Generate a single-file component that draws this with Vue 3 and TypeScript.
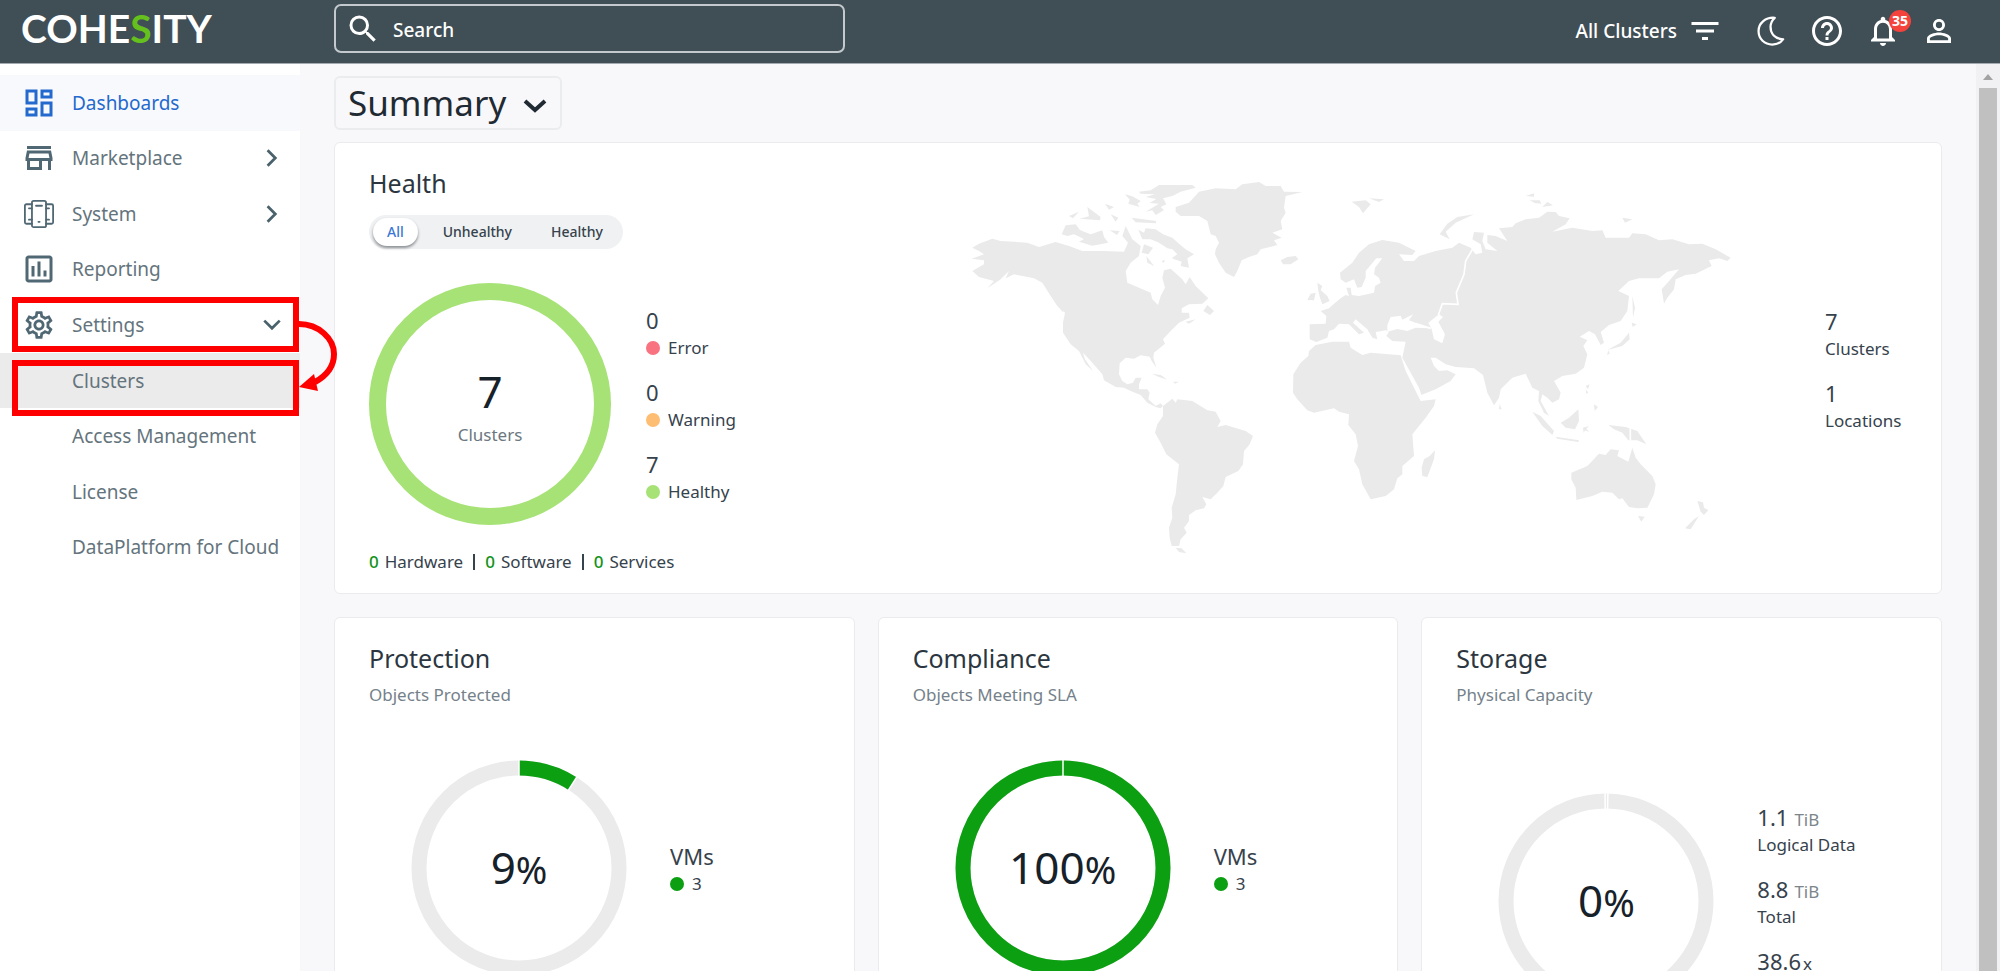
<script setup lang="ts">
import { ref } from 'vue'

interface NavItem {
  label: string
  icon?: 'dashboards' | 'marketplace' | 'system' | 'reporting' | 'settings'
  arrow?: 'right' | 'down'
  state?: 'active' | 'hover'
}

interface Stat {
  value: string
  label?: string
  unit?: string
  dot?: string
}

const navItems: NavItem[] = [
  { label: 'Dashboards', icon: 'dashboards', state: 'active' },
  { label: 'Marketplace', icon: 'marketplace', arrow: 'right' },
  { label: 'System', icon: 'system', arrow: 'right' },
  { label: 'Reporting', icon: 'reporting' },
  { label: 'Settings', icon: 'settings', arrow: 'down' },
  { label: 'Clusters', state: 'hover' },
  { label: 'Access Management' },
  { label: 'License' },
  { label: 'DataPlatform for Cloud' },
]

const filters = ['All', 'Unhealthy', 'Healthy']
const activeFilter = ref('All')
const dashboard = ref('Summary')
const query = ref('')

const healthStats: Stat[] = [
  { value: '0', label: 'Error', dot: 'error' },
  { value: '0', label: 'Warning', dot: 'warning' },
  { value: '7', label: 'Healthy', dot: 'healthy' },
]

const placeStats: Stat[] = [
  { value: '7', label: 'Clusters' },
  { value: '1', label: 'Locations' },
]

const issues = [
  { count: 0, label: 'Hardware' },
  { count: 0, label: 'Software' },
  { count: 0, label: 'Services' },
]

const tiles: { title: string; subtitle: string; percent: number; low?: boolean; stats: Stat[] }[] = [
  {
    title: 'Protection',
    subtitle: 'Objects Protected',
    percent: 9,
    stats: [{ value: 'VMs', label: '3', dot: 'ok' }],
  },
  {
    title: 'Compliance',
    subtitle: 'Objects Meeting SLA',
    percent: 100,
    stats: [{ value: 'VMs', label: '3', dot: 'ok' }],
  },
  {
    title: 'Storage',
    subtitle: 'Physical Capacity',
    percent: 0,
    low: true,
    stats: [
      { value: '1.1', unit: 'TiB', label: 'Logical Data' },
      { value: '8.8', unit: 'TiB', label: 'Total' },
      { value: '38.6', unit: 'x' },
    ],
  },
]

const tickAngles = (percent: number): number[] => {
  if (percent === 0) return [-0.5, 1]
  return percent === 100 ? [0] : [0, percent * 3.6]
}
</script>

<template>
  <div class="shell">
    <header class="topbar">
      <a class="logo" href="#" aria-label="Cohesity home">COHE<span>S</span>ITY</a>
      <label class="search">
        <svg class="icon" viewBox="0 0 24 24" aria-hidden="true">
          <path d="M15.5 14h-.79l-.28-.27A6.47 6.47 0 0 0 16 9.500 6.500 6.500 0 1 0 9.500 16c1.610 0 3.090-.59 4.230-1.570l.27.28v.79l5 4.990L20.490 19l-4.990-5zm-6 0C7.010 14 5 11.990 5 9.500S7.010 5 9.500 5 14 7.010 14 9.500 11.990 14 9.500 14z" />
        </svg>
        <input v-model="query" type="search" placeholder="Search" aria-label="Search" />
      </label>
      <div class="tools">
        <button class="scope" type="button">
          All Clusters
          <svg class="icon" viewBox="0 0 24 24" aria-hidden="true">
            <path d="M10 18h4v-2h-4v2zM3 6v2h18V6H3zm3 7h12v-2H6v2z" />
          </svg>
        </button>
        <button class="tool" type="button" aria-label="Dark mode">
          <svg class="icon line" viewBox="0 0 24 24" aria-hidden="true">
            <path d="M14.500 3.200C8.500 2.700 3.700 6.700 3.700 12s4 9 9.200 9c3.200 0 5.700-1.200 7.200-3.500-5.600-.4-8.400-3.700-8.400-8.300 0-2.400 1-4.400 2.800-6z" />
          </svg>
        </button>
        <button class="tool" type="button" aria-label="Help">
          <svg class="icon" viewBox="0 0 24 24" aria-hidden="true">
            <path d="M11 18h2v-2h-2v2zm1-16C6.480 2 2 6.480 2 12s4.480 10 10 10 10-4.480 10-10S17.520 2 12 2zm0 18c-4.410 0-8-3.590-8-8s3.590-8 8-8 8 3.590 8 8-3.590 8-8 8zm0-14c-2.210 0-4 1.790-4 4h2c0-1.100.9-2 2-2s2 .9 2 2c0 2-3 1.750-3 5h2c0-2.250 3-2.500 3-5 0-2.210-1.790-4-4-4z" />
          </svg>
        </button>
        <button class="tool" type="button" aria-label="Notifications">
          <svg class="icon" viewBox="0 0 24 24" aria-hidden="true">
            <path d="M12 22c1.100 0 2-.9 2-2h-4c0 1.100.9 2 2 2zm6-6v-5c0-3.070-1.630-5.640-4.500-6.320V4c0-.83-.67-1.500-1.500-1.500s-1.500.67-1.500 1.500v.68C7.640 5.360 6 7.920 6 11v5l-2 2v1h16v-1l-2-2zm-2 1H8v-6c0-2.480 1.510-4.500 4-4.500s4 2.020 4 4.500v6z" />
          </svg>
          <span class="badge">35</span>
        </button>
        <button class="tool" type="button" aria-label="Account">
          <svg class="icon" viewBox="0 0 24 24" aria-hidden="true">
            <path d="M12 5.900a2.100 2.100 0 1 1 0 4.200 2.100 2.100 0 0 1 0-4.200m0 9c2.970 0 6.100 1.460 6.100 2.100v1.100H5.900V17c0-.64 3.130-2.100 6.100-2.100M12 4C9.790 4 8 5.790 8 8s1.790 4 4 4 4-1.790 4-4-1.790-4-4-4zm0 9c-2.670 0-8 1.340-8 4v3h16v-3c0-2.660-5.330-4-8-4z" />
          </svg>
        </button>
      </div>
    </header>

    <div class="body">
      <nav class="sidebar" aria-label="Main">
        <ul>
          <li v-for="item in navItems" :key="item.label">
            <component
              :is="item.arrow ? 'button' : 'a'"
              class="nav-item"
              :class="item.state"
              :href="item.arrow ? undefined : '#'"
              :type="item.arrow ? 'button' : undefined"
            >
              <span class="nav-icon">
                <svg v-if="item.icon === 'dashboards'" class="icon" viewBox="0 0 24 24" aria-hidden="true">
                  <path d="M19 5v2h-4V5h4M9 5v6H5V5h4m10 8v6h-4v-6h4M9 17v2H5v-2h4M21 3h-8v6h8V3zM11 3H3v10h8V3zm10 8h-8v10h8V11zm-10 4H3v6h8v-6z" />
                </svg>
                <svg v-else-if="item.icon === 'marketplace'" class="icon" viewBox="0 0 24 24" aria-hidden="true">
                  <path d="M18.360 9l.6 3H5.040l.6-3h12.720M20 4H4v2h16V4zm0 3H4l-1 5v2h1v6h10v-6h4v6h2v-6h1v-2l-1-5zM6 18v-4h6v4H6z" />
                </svg>
                <svg v-else-if="item.icon === 'system'" class="icon line thin" viewBox="0 0 24 24" aria-hidden="true">
                  <rect x="7.300" y="3.200" width="9.400" height="17.600" rx="1.200" />
                  <path d="M7.300 5.500H3.600a1 1 0 0 0-1 1v11a1 1 0 0 0 1 1h3.700M16.700 5.500h3.700a1 1 0 0 1 1 1v11a1 1 0 0 1-1 1h-3.700M10 6.500h4M11.600 17.200h.8M5.300 8.200h2M5.300 15.800h2M16.700 8.200h2M16.700 15.800h2" />
                </svg>
                <svg v-else-if="item.icon === 'reporting'" class="icon" viewBox="0 0 24 24" aria-hidden="true">
                  <path d="M9 17H7v-7h2v7zm4 0h-2V7h2v10zm4 0h-2v-4h2v4zm2 2H5V5h14v14zm0-16H5c-1.100 0-2 .9-2 2v14c0 1.100.9 2 2 2h14c1.100 0 2-.9 2-2V5c0-1.100-.9-2-2-2z" />
                </svg>
                <svg v-else-if="item.icon === 'settings'" class="icon" viewBox="-1 -1 26 26" aria-hidden="true">
                  <path d="M19.430 12.980c.04-.32.07-.64.07-.98 0-.34-.03-.66-.07-.98l2.110-1.650c.19-.15.24-.42.12-.64l-2-3.460c-.09-.16-.26-.25-.44-.25-.06 0-.12.010-.17.030l-2.490 1c-.52-.4-1.080-.73-1.690-.98l-.38-2.650C14.460 2.180 14.250 2 14 2h-4c-.25 0-.46.18-.49.42l-.38 2.650c-.61.25-1.170.59-1.690.98l-2.490-1c-.06-.02-.12-.03-.18-.03-.17 0-.34.09-.43.25l-2 3.460c-.13.22-.07.49.12.64l2.110 1.650c-.04.32-.07.65-.07.98 0 .33.03.66.07.98l-2.110 1.650c-.19.15-.24.42-.12.64l2 3.460c.09.16.26.25.44.25.06 0 .12-.01.17-.03l2.490-1c.52.4 1.080.73 1.690.98l.38 2.650c.03.24.24.42.49.42h4c.25 0 .46-.18.49-.42l.38-2.650c.61-.25 1.170-.59 1.690-.98l2.490 1c.06.02.12.03.18.03.17 0 .34-.09.43-.25l2-3.460c.12-.22.07-.49-.12-.64l-2.110-1.650zm-1.980-1.710c.04.31.05.52.05.73 0 .21-.02.43-.05.73l-.14 1.130.89.7 1.080.84-.7 1.210-1.270-.51-1.040-.42-.9.68c-.43.32-.84.56-1.250.73l-1.060.43-.16 1.130-.2 1.350h-1.400l-.19-1.350-.16-1.130-1.060-.43c-.43-.18-.83-.41-1.230-.71l-.91-.7-1.060.43-1.270.51-.7-1.210 1.080-.84.89-.7-.14-1.130c-.03-.31-.05-.54-.05-.74s.02-.43.05-.73l.14-1.130-.89-.7-1.080-.84.7-1.210 1.270.51 1.040.42.9-.68c.43-.32.84-.56 1.250-.73l1.060-.43.16-1.130.2-1.350h1.390l.19 1.350.16 1.130 1.060.43c.43.18.83.41 1.230.71l.91.7 1.060-.43 1.270-.51.7 1.210-1.070.85-.89.7.14 1.130zM12 8c-2.210 0-4 1.790-4 4s1.790 4 4 4 4-1.790 4-4-1.790-4-4-4zm0 6c-1.100 0-2-.9-2-2s.9-2 2-2 2 .9 2 2-.9 2-2 2z" />
                </svg>
              </span>
              <span class="nav-label">{{ item.label }}</span>
              <svg v-if="item.arrow" class="chevron" :class="item.arrow" viewBox="0 0 20 20" aria-hidden="true">
                <path d="M6 3l7 7-7 7" />
              </svg>
            </component>
          </li>
        </ul>
        <svg class="callout" viewBox="0 0 328 120" aria-hidden="true">
          <rect x="3" y="3" width="281" height="49" />
          <rect x="3" y="66" width="281" height="50" />
          <path class="curve" d="M287 27C307 27 322 42 322 57C322 70 314 79 303 85" />
          <path class="head" d="M287 90L302 77L306 94Z" />
        </svg>
      </nav>

      <main class="content">
        <div class="picker">
          <select v-model="dashboard" aria-label="Dashboard">
            <option>Summary</option>
          </select>
          <svg viewBox="0 0 24 14" aria-hidden="true"><path d="M2 2l10 9L22 2" /></svg>
        </div>

        <div class="cards">
          <section class="card health">
            <div class="health-main">
              <h2>Health</h2>
              <div class="segments" role="group" aria-label="Cluster filter">
                <button
                  v-for="name in filters"
                  :key="name"
                  type="button"
                  :class="{ on: activeFilter === name }"
                  @click="activeFilter = name"
                >
                  {{ name }}
                </button>
              </div>
              <div class="health-row">
                <div class="ring big">
                  <svg viewBox="0 0 242 242" aria-hidden="true">
                    <circle class="healthy-ring" cx="121" cy="121" r="112.500" />
                  </svg>
                  <div class="ring-text">
                    <span class="figure">7</span>
                    <span class="caption">Clusters</span>
                  </div>
                </div>
                <dl class="stats">
                  <div v-for="s in healthStats" :key="s.label" class="stat">
                    <dt><i class="dot" :class="s.dot"></i>{{ s.label }}</dt>
                    <dd>{{ s.value }}</dd>
                  </div>
                </dl>
              </div>
              <ul class="issues">
                <li v-for="i in issues" :key="i.label"><b>{{ i.count }}</b>{{ i.label }}</li>
              </ul>
            </div>

            <svg class="map" viewBox="0 0 2340 1200" role="img" aria-label="World map">
              <g class="land">
                <path d="M40 230L60 218L100 203L125 210L205 215L240 228L290 213L330 225L370 240L430 240L495 242L507 215L490 195L500 165L520 205L545 225L540 255L515 275L500 300L505 335L540 350L575 365L580 385L597 402L605 375L618 350L610 320L615 298L635 293L670 325L680 340L692 318L710 345L748 382L730 398L690 400L668 412L668 425L690 425L692 440L660 455L635 480L612 505L618 518L585 545L583 560L592 590L578 570L572 557L545 553L525 563L500 560L482 577L480 610L490 630L505 640L522 635L530 620L548 620L540 640L540 655L565 655L572 665L568 685L590 705L605 697L612 705L605 712L590 708L565 695L545 672L515 660L495 650L470 648L435 628L430 610L400 575L372 545L378 565L402 600L380 580L360 540L335 520L312 485L312 455L318 425L295 405L275 375L250 335L225 322L165 310L140 322L150 300L125 325L85 352L105 330L60 318L40 300L75 280L75 268L38 263L75 250L60 240Z" />
                <path d="M612 705L640 683L650 695L655 685L700 690L745 718L770 722L785 750L775 768L800 762L860 780L882 795L872 820L855 840L852 880L838 900L800 918L793 945L775 965L755 985L730 978L742 1000L735 1012L710 1018L690 1032L690 1050L675 1070L683 1085L665 1105L660 1125L638 1125L632 1100L630 1070L640 1040L638 1010L650 970L655 920L660 880L622 850L605 815L588 785L595 760L612 735ZM650 1130L668 1132L682 1147L660 1143Z" />
                <path d="M650 108L690 95L720 62L770 52L830 55L850 40L900 33L920 45L965 45L975 62L1030 63L980 75L975 110L980 125L965 150L970 175L940 185L968 200L945 208L955 222L905 235L895 250L870 258L848 268L835 300L825 318L800 305L780 275L768 250L770 235L780 215L770 195L755 190L745 150L720 135L665 135L650 122Z" />
                <path d="M965 268L985 258L1010 255L1018 265L995 280L972 280Z" />
                <path d="M1075 335L1090 345L1085 358L1105 375L1112 390L1090 400L1083 380L1078 360ZM1045 387L1055 368L1070 365L1065 388Z" />
                <path d="M540 62L575 58L600 42L700 42L710 50L665 62L640 75L612 82L622 100L605 108L615 118L590 132L580 118L560 122L600 98L572 96L592 84L560 78L588 70L545 68ZM498 70L520 76L545 90L535 98L542 108L508 98L512 86ZM308 190L320 163L350 160L362 176L375 182L395 190L430 178L435 198L448 215L400 224L360 212L375 204L345 190L325 195ZM538 176L555 185L560 172L590 175L612 190L640 200L660 218L680 235L705 250L685 262L690 290L665 285L668 272L638 262L655 250L640 235L625 232L600 215L575 205L550 205ZM555 220L582 230L568 250L548 245ZM330 135L360 122L342 142ZM385 108L425 138L423 148L362 143L390 136ZM438 98L465 108L450 116ZM455 130L478 140L470 152ZM518 140L592 150L590 157L530 154ZM452 178L482 180L474 192ZM562 255L585 285L565 275ZM608 270L618 266L614 276Z" />
                <path d="M733 420L745 402L765 420L753 432ZM680 452L710 445L690 458ZM578 608L605 612L625 626L600 618ZM642 632L660 632L648 638ZM295 403L322 418L310 422Z" />
              </g>
              <g class="land" transform="translate(1140 0)">
                <path d="M-88 460L-40 458L-38 435L-55 420L-30 412L-15 398L5 382L20 372L30 375L22 350L35 350L38 372L60 375L105 365L108 345L125 335L120 320L105 310L108 290L130 262L112 262L80 300L80 320L68 348L55 350L45 325L20 335L5 325L3 305L40 275L60 245L90 220L130 207L180 215L230 240L220 252L180 250L195 270L225 270L240 255L290 240L340 230L360 215L395 230L410 250L430 245L425 220L400 205L405 183L435 185L430 210L440 235L475 240L445 215L445 192L470 195L505 210L480 172L520 168L530 157L560 145L600 140L625 122L650 123L660 135L692 142L680 160L640 182L700 170L760 180L790 178L800 200L870 200L880 187L920 190L960 208L1000 205L1050 220L1090 218L1130 235L1175 260L1165 270L1140 262L1110 268L1118 285L1070 308L1040 312L1010 325L1005 355L985 380L975 398L968 355L990 330L1020 295L985 302L960 322L900 322L870 330L838 360L870 375L865 420L845 450L810 462L785 483L795 515L785 522L768 490L750 480L722 497L745 508L733 525L745 550L735 590L710 608L670 615L645 630L665 665L660 685L640 695L625 680L610 670L605 690L630 735L615 725L598 690L600 660L580 650L560 608L520 620L485 655L480 680L465 703L445 665L432 612L405 592L350 588L320 580L290 560L275 560L285 585L300 600L325 598L350 610L335 630L290 655L247 672L240 650L215 605L190 560L200 512L160 510L142 495L150 482L140 478L110 483L115 505L100 500L85 475L50 445L42 455L75 485L60 490L30 460L0 458L-15 475L-30 480L-35 500L-68 513L-88 505Z" />
                <path d="M-70 522L-20 512L30 512L35 530L70 552L95 545L185 553L200 600L225 650L245 690L290 685L285 705L260 740L220 790L225 855L190 885L190 910L175 922L165 955L140 975L95 985L70 940L60 895L45 870L57 825L50 790L28 762L30 730L0 722L-15 712L-75 725L-95 718L-125 685L-138 665L-137 610L-115 575L-92 555L-90 540Z" />
                <path d="M288 838L285 865L265 918L250 915L248 890L255 865L272 855Z" />
                <path d="M697 905L745 885L780 848L800 852L815 835L840 838L835 855L868 872L880 830L890 860L905 880L940 915L950 940L945 970L925 1010L895 1012L870 1008L850 982L840 985L820 965L790 962L760 975L712 987L710 950L697 925ZM897 1035L917 1037L907 1052Z" />
                <path d="M1075 990L1092 994L1095 1010L1108 1018L1095 1032L1085 1022ZM1080 1035L1055 1075L1038 1072L1065 1045Z" />
                <path d="M808 762L860 768L895 780L922 820L895 808L868 808L850 785L825 775ZM665 755L690 740L718 715L720 750L708 775L680 770ZM580 722L605 735L645 780L640 792L610 765ZM650 797L720 808L718 813L655 803ZM732 770L750 765L742 773L750 783L738 778L734 786ZM740 645L752 640L747 655ZM765 700L777 708L767 720ZM740 655L748 665L742 668Z" />
                <path d="M870 485L872 505L850 525L805 537L845 515ZM878 455L893 460L881 468ZM880 375L888 410L882 440ZM482 700L488 715L480 715ZM808 538L812 548L804 552Z" />
                <path d="M38 92L80 88L95 100L72 127L60 108ZM90 82L135 85L120 93ZM302 190L325 158L355 138L405 130L350 155L320 182L332 205ZM560 75L585 67L585 77ZM572 88L602 88L607 98L587 96ZM610 108L625 93L642 103ZM850 140L880 145L858 155Z" />
              </g>
              <g transform="translate(1140 0)">
                <path class="sea" d="M145 482L145 462L155 438L185 434L190 446L222 430L210 448L240 460L275 472L230 470L205 480L175 474ZM268 455L300 430L312 438L298 452L318 490L310 517L285 505L278 475Z" />
                <path class="seam" d="M402 232L380 270L375 310L352 365L357 400L310 398L298 432M230 458L275 472M874 770V812" />
              </g>
            </svg>

            <dl class="stats places">
              <div v-for="s in placeStats" :key="s.label" class="stat">
                <dt>{{ s.label }}</dt>
                <dd>{{ s.value }}</dd>
              </div>
            </dl>
          </section>

          <section v-for="t in tiles" :key="t.title" class="card tile">
            <h2>{{ t.title }}</h2>
            <p class="subtitle">{{ t.subtitle }}</p>
            <div class="tile-row" :class="{ low: t.low }">
              <div class="ring">
                <svg viewBox="0 0 216 216" aria-hidden="true">
                  <circle class="track" cx="108" cy="108" r="100" />
                  <circle
                    v-if="t.percent > 0"
                    class="value"
                    cx="108"
                    cy="108"
                    r="100"
                    pathLength="100"
                    :stroke-dasharray="`${t.percent} 100`"
                    transform="rotate(-90 108 108)"
                  />
                  <path
                    v-for="a in tickAngles(t.percent)"
                    :key="a"
                    class="tick"
                    d="M108 0V17"
                    :transform="`rotate(${a} 108 108)`"
                  />
                </svg>
                <div class="ring-text">
                  <span class="figure">{{ t.percent }}<small>%</small></span>
                </div>
              </div>
              <dl class="stats">
                <div v-for="s in t.stats" :key="s.value" class="stat">
                  <dt><i v-if="s.dot" class="dot" :class="s.dot"></i>{{ s.label }}</dt>
                  <dd>{{ s.value }}<span v-if="s.unit" class="unit" :class="{ times: s.unit === 'x' }">{{ s.unit }}</span></dd>
                </div>
              </dl>
            </div>
          </section>
        </div>
      </main>

      <div class="scrollbar" aria-hidden="true">
        <svg viewBox="0 0 24 24"><path d="M12 10l5 6H7z" /></svg>
        <div class="thumb"></div>
      </div>
    </div>
  </div>
</template>

<style>
body {
  margin: 0;
  overflow: hidden;
}
</style>

<style scoped>
.shell {
  display: flex;
  flex-direction: column;
  height: 100vh;
  overflow: hidden;
  color: #36424c;
  font-family: 'Noto Sans', 'Open Sans', sans-serif;
  font-size: 17px;
  line-height: 24px;
}

.shell *,
.shell *::before {
  box-sizing: border-box;
}

button,
input,
select {
  border: 0;
  padding: 0;
  background: none;
  color: inherit;
  font: inherit;
}

a {
  color: inherit;
  text-decoration: none;
}

ul,
dl,
dd,
h2,
p {
  margin: 0;
  padding: 0;
  list-style: none;
}

.icon {
  display: block;
  width: 36px;
  height: 36px;
  fill: currentColor;
}

.icon.line {
  fill: none;
  stroke: currentColor;
  stroke-width: 1.500;
  stroke-linejoin: round;
  stroke-linecap: round;
}

.icon.thin {
  stroke-width: 1.200;
}

/* Top bar */
.topbar {
  display: flex;
  flex: none;
  align-items: center;
  height: 64px;
  padding: 0 43px 2px 21px;
  border-bottom: 1px solid #a3abb0;
  background: #404e56;
  color: #fff;
  font-size: 19px;
  font-weight: 500;
}

.logo {
  flex: none;
  width: 313px;
  padding-bottom: 6px;
  font-family: Lato, sans-serif;
  font-size: 39px;
  font-weight: 700;
  line-height: 48px;
}

.logo span {
  color: #65c01e;
}

.search {
  display: flex;
  flex: 0 1 511px;
  align-items: center;
  gap: 12px;
  height: 49px;
  margin-bottom: 4px;
  padding-left: 9px;
  border: 2px solid #c3c9cc;
  border-radius: 7px;
}

.search input {
  flex: 1;
  min-width: 0;
  padding-top: 3px;
  outline: 0;
}

.search input::placeholder {
  color: #fff;
  opacity: 1;
}

.tools {
  display: flex;
  gap: 20px;
  margin-left: auto;
}

.scope {
  display: flex;
  align-items: center;
  gap: 10px;
  margin-right: 10px;
}

.tool {
  position: relative;
}

.badge {
  position: absolute;
  top: -3px;
  right: -10px;
  width: 22px;
  height: 22px;
  border-radius: 50%;
  background: #f4433c;
  font-size: 14px;
  font-weight: 700;
  line-height: 22px;
  text-align: center;
}

/* Sidebar */
.body {
  display: flex;
  flex: 1;
  min-height: 0;
  background: #f8f8fb;
}

.sidebar {
  position: relative;
  flex: none;
  width: 300px;
  padding-top: 11px;
  background: #fff;
}

.sidebar ul {
  display: grid;
  grid-template-columns: minmax(0, 1fr);
  grid-auto-rows: 1fr;
  height: 500px;
}

.nav-item {
  display: flex;
  align-items: center;
  width: 100%;
  height: 100%;
  padding: 0 17px 0 21px;
  color: #64747d;
  font-size: 19px;
  text-align: left;
}

.nav-item.active {
  background: #f8f9fc;
  color: #2369ce;
}

.nav-item.hover {
  background: #ebebeb;
}

.nav-icon {
  flex: none;
  width: 51px;
  color: #506874;
}

.active .nav-icon {
  color: inherit;
}

.nav-label {
  flex: 1;
  white-space: nowrap;
}

.chevron {
  width: 22px;
  height: 22px;
  fill: none;
  stroke: #4a626d;
  stroke-width: 2.500;
}

.chevron.down {
  transform: rotate(90deg);
}

.callout {
  position: absolute;
  top: 233px;
  left: 12px;
  z-index: 1;
  width: 328px;
  height: 120px;
  fill: none;
  stroke: #f00;
  stroke-width: 6;
  pointer-events: none;
}

.callout .head {
  fill: #f00;
  stroke: none;
}

/* Content */
.content {
  flex: 1;
  min-width: 0;
  padding: 12px 34px 24px;
}

.picker {
  position: relative;
  width: max-content;
  margin-bottom: 12px;
  color: #1f2a33;
}

.picker select {
  display: block;
  height: 54px;
  padding: 0 53px 0 12px;
  border: 2px solid #ebecee;
  border-radius: 6px;
  appearance: none;
  font-size: 35px;
  line-height: 48px;
}

.picker svg {
  position: absolute;
  top: 23px;
  right: 15px;
  width: 24px;
  height: 14px;
  fill: none;
  stroke: currentColor;
  stroke-width: 4;
  pointer-events: none;
}

.cards {
  display: grid;
  grid-template-columns: repeat(3, minmax(0, 1fr));
  gap: 23px;
}

.card {
  padding: 24px 34px 19px;
  border: 1px solid #ebebed;
  border-radius: 6px;
  background: #fff;
}

h2 {
  color: #2b3640;
  font-size: 25px;
  font-weight: 400;
  line-height: 32px;
}

.health {
  display: grid;
  grid-column: 1 / -1;
  grid-template-columns: 504px minmax(0, 1fr) 82px;
  align-items: center;
}

.segments {
  display: flex;
  gap: 11px;
  width: max-content;
  margin-top: 16px;
  padding: 3px 6px 3px 4px;
  border-radius: 17px;
  background: #eff1f3;
  font-size: 14px;
  font-weight: 500;
}

.segments button {
  height: 28px;
  padding: 0 14px;
  border-radius: 14px;
}

.segments .on {
  background: #fff;
  box-shadow: 0 2px 3px #8b8f92;
  color: #3a77d6;
}

.health-row {
  display: flex;
  align-items: center;
  gap: 35px;
  margin-top: 34px;
}

.ring {
  display: grid;
  flex: none;
  place-items: center;
  width: 216px;
}

.ring.big {
  width: 242px;
}

.ring > * {
  grid-area: 1 / 1;
}

.ring svg {
  display: block;
  width: 100%;
  fill: none;
}

.healthy-ring {
  stroke: #a6e276;
  stroke-width: 17;
}

.track {
  stroke: #ebebeb;
  stroke-width: 15;
}

.value {
  stroke: #0c9f12;
  stroke-width: 15;
}

.tick {
  stroke: #fff;
  stroke-width: 1.500;
}

.ring-text {
  display: flex;
  flex-direction: column;
  align-items: center;
}

.figure {
  color: #17212a;
  font-size: 44px;
  line-height: 60px;
}

.figure small {
  font-size: 38px;
}

.caption {
  margin-top: 2px;
  color: #6c7780;
}

.stats {
  display: grid;
  gap: 17px;
}

.places {
  padding-bottom: 2px;
}

.stat {
  display: flex;
  flex-direction: column-reverse;
}

.stat dt {
  display: flex;
  align-items: center;
  min-height: 24px;
  white-space: nowrap;
}

.stat dd {
  font-size: 22px;
  line-height: 31px;
}

.dot {
  width: 14px;
  height: 14px;
  margin-right: 8px;
  border-radius: 50%;
}

.dot.error {
  background: #f9727f;
}

.dot.warning {
  background: #fdbd72;
}

.dot.healthy {
  background: #a6e276;
}

.dot.ok {
  background: #0c9f12;
}

.unit {
  margin-left: 6px;
  color: #7b868c;
  font-size: 17px;
  line-height: 1;
}

.unit.times {
  margin-left: 2px;
  color: inherit;
}

.issues {
  display: flex;
  margin-top: 25px;
}

.issues li {
  display: flex;
  align-items: center;
}

.issues li + li::before {
  width: 2px;
  height: 16px;
  margin: 0 10px;
  background: #36424c;
  content: '';
}

.issues b {
  margin-right: 6px;
  color: #14931a;
  font-weight: 500;
}

.map {
  display: block;
  justify-self: center;
  width: 100%;
  max-width: 780px;
}

.land {
  fill: #eaeaea;
}

.sea {
  fill: #fff;
}

.seam {
  fill: none;
  stroke: #fff;
  stroke-width: 5;
}

.subtitle {
  margin-top: 9px;
  color: #75818a;
}

.tile-row {
  display: flex;
  align-items: center;
  gap: 43px;
  margin-top: 53px;
  padding-left: 42px;
}

.tile-row.low {
  margin-top: 86px;
}

/* Scrollbar */
.scrollbar {
  display: flex;
  flex: none;
  flex-direction: column;
  align-items: center;
  width: 24px;
  background: #f1f1f3;
}

.scrollbar svg {
  width: 24px;
  height: 24px;
  fill: #a3a3a3;
}

.thumb {
  flex: 1;
  width: 18px;
  background: #c0c0c0;
}
</style>
